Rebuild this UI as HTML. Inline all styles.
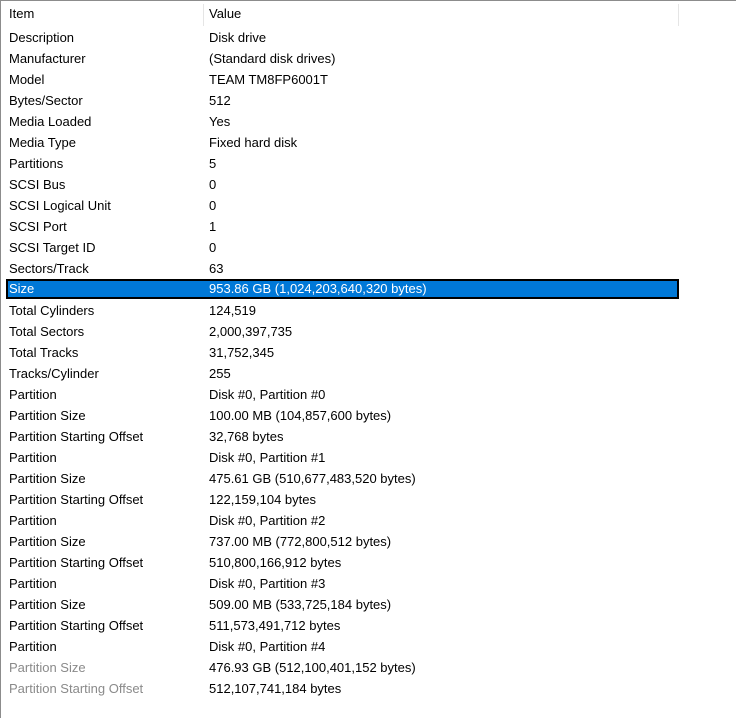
<!DOCTYPE html>
<html><head><meta charset="utf-8"><style>
body{margin:0;width:736px;height:718px;background:#fff;overflow:hidden;font-family:"Liberation Sans","DejaVu Sans",sans-serif;font-size:13px;color:#000;position:relative}
.top{position:absolute;left:0;top:0;width:736px;height:1px;background:#8c8c8c}
.left{position:absolute;left:0;top:0;width:1px;height:718px;background:#8c8c8c}
.hd{position:absolute;top:1px;height:26px;left:1px;width:735px}
.hd span{position:absolute;top:5px}
.vl{position:absolute;top:3px;width:1px;height:22px;background:#e5e5e5}
.r{position:absolute;left:0;height:21px;width:736px;line-height:21px}
.r span{position:absolute}
.a{left:9px}.b{left:209px}
.sel{background:#0078d7;color:#fff;outline:2px solid #000;outline-offset:-2px;left:6px;width:673px}
.sel .a{left:3px}.sel .b{left:203px}
.g{color:#8a8a8a}
</style></head><body>
<div class="top"></div><div class="left"></div>
<div class="hd"><span style="left:8px">Item</span><span style="left:208px">Value</span><div class="vl" style="left:202px"></div><div class="vl" style="left:677px"></div></div>
<div class="r" style="top:27px"><span class="a">Description</span><span class="b">Disk drive</span></div>
<div class="r" style="top:48px"><span class="a">Manufacturer</span><span class="b">(Standard disk drives)</span></div>
<div class="r" style="top:69px"><span class="a">Model</span><span class="b">TEAM TM8FP6001T</span></div>
<div class="r" style="top:90px"><span class="a">Bytes/Sector</span><span class="b">512</span></div>
<div class="r" style="top:111px"><span class="a">Media Loaded</span><span class="b">Yes</span></div>
<div class="r" style="top:132px"><span class="a">Media Type</span><span class="b">Fixed hard disk</span></div>
<div class="r" style="top:153px"><span class="a">Partitions</span><span class="b">5</span></div>
<div class="r" style="top:174px"><span class="a">SCSI Bus</span><span class="b">0</span></div>
<div class="r" style="top:195px"><span class="a">SCSI Logical Unit</span><span class="b">0</span></div>
<div class="r" style="top:216px"><span class="a">SCSI Port</span><span class="b">1</span></div>
<div class="r" style="top:237px"><span class="a">SCSI Target ID</span><span class="b">0</span></div>
<div class="r" style="top:258px"><span class="a">Sectors/Track</span><span class="b">63</span></div>
<div class="r sel" style="top:279px;height:20px;line-height:20px"><span class="a">Size</span><span class="b">953.86 GB (1,024,203,640,320 bytes)</span></div>
<div class="r" style="top:300px"><span class="a">Total Cylinders</span><span class="b">124,519</span></div>
<div class="r" style="top:321px"><span class="a">Total Sectors</span><span class="b">2,000,397,735</span></div>
<div class="r" style="top:342px"><span class="a">Total Tracks</span><span class="b">31,752,345</span></div>
<div class="r" style="top:363px"><span class="a">Tracks/Cylinder</span><span class="b">255</span></div>
<div class="r" style="top:384px"><span class="a">Partition</span><span class="b">Disk #0, Partition #0</span></div>
<div class="r" style="top:405px"><span class="a">Partition Size</span><span class="b">100.00 MB (104,857,600 bytes)</span></div>
<div class="r" style="top:426px"><span class="a">Partition Starting Offset</span><span class="b">32,768 bytes</span></div>
<div class="r" style="top:447px"><span class="a">Partition</span><span class="b">Disk #0, Partition #1</span></div>
<div class="r" style="top:468px"><span class="a">Partition Size</span><span class="b">475.61 GB (510,677,483,520 bytes)</span></div>
<div class="r" style="top:489px"><span class="a">Partition Starting Offset</span><span class="b">122,159,104 bytes</span></div>
<div class="r" style="top:510px"><span class="a">Partition</span><span class="b">Disk #0, Partition #2</span></div>
<div class="r" style="top:531px"><span class="a">Partition Size</span><span class="b">737.00 MB (772,800,512 bytes)</span></div>
<div class="r" style="top:552px"><span class="a">Partition Starting Offset</span><span class="b">510,800,166,912 bytes</span></div>
<div class="r" style="top:573px"><span class="a">Partition</span><span class="b">Disk #0, Partition #3</span></div>
<div class="r" style="top:594px"><span class="a">Partition Size</span><span class="b">509.00 MB (533,725,184 bytes)</span></div>
<div class="r" style="top:615px"><span class="a">Partition Starting Offset</span><span class="b">511,573,491,712 bytes</span></div>
<div class="r" style="top:636px"><span class="a">Partition</span><span class="b">Disk #0, Partition #4</span></div>
<div class="r" style="top:657px"><span class="a g">Partition Size</span><span class="b">476.93 GB (512,100,401,152 bytes)</span></div>
<div class="r" style="top:678px"><span class="a g">Partition Starting Offset</span><span class="b">512,107,741,184 bytes</span></div>
</body></html>
